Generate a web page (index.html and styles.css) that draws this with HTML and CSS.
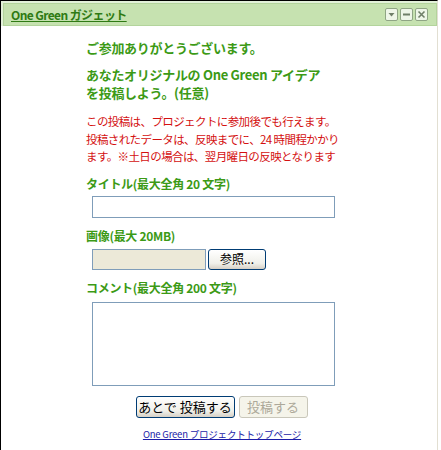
FILE: index.html
```html
<!DOCTYPE html>
<html lang="ja">
<head>
<meta charset="utf-8">
<title>One Green ガジェット</title>
<link rel="stylesheet" href="styles.css">
</head>
<body>
<div class="frame">
  <div class="header-wrap">
    <div class="header">
      <a class="title" href="#">One Green ガジェット</a>
      <div class="tools">
        <span class="tool"><svg width="11" height="11" viewBox="0 0 11 11"><path d="M2.5 4 L8.5 4 L5.5 7.5 Z" fill="#6f7f68"/></svg></span>
        <span class="tool"><svg width="11" height="11" viewBox="0 0 11 11"><rect x="2" y="4.5" width="7" height="2" fill="#6f7f68"/></svg></span>
        <span class="tool"><svg width="11" height="11" viewBox="0 0 11 11"><path d="M2.5 2.5 L8.5 8.5 M8.5 2.5 L2.5 8.5" stroke="#6f7f68" stroke-width="1.6"/></svg></span>
      </div>
    </div>
  </div>
  <div class="content">
    <p class="h1">ご参加ありがとうございます。</p>
    <p class="h2">あなたオリジナルの One Green アイデア<br>を投稿しよう。(任意)</p>
    <p class="note">この投稿は、プロジェクトに参加後でも行えます。<br>投稿されたデータは、反映までに、24 時間程かかり<br>ます。※土日の場合は、翌月曜日の反映となります</p>
    <p class="label">タイトル(最大全角 20 文字)</p>
    <div class="field"><input class="text" type="text"></div>
    <p class="label">画像(最大 20MB)</p>
    <div class="field file-row">
      <span class="file-box"></span>
      <button class="btn browse" type="button">参照...</button>
    </div>
    <p class="label">コメント(最大全角 200 文字)</p>
    <div class="field"><textarea class="area"></textarea></div>
  </div>
  <div class="actions">
    <button class="btn later" type="button">あとで 投稿する</button>
    <button class="btn submit" type="button" disabled>投稿する</button>
  </div>
  <div class="footer"><a class="link" href="#">One Green プロジェクトトップページ</a></div>
</div>
</body>
</html>
```

FILE: styles.css
```css
html, body {
  margin: 0;
  padding: 0;
  background: #ffffff;
}
body {
  font-family: "Noto Sans CJK JP", "Noto Sans", sans-serif;
}
.frame {
  width: 438px;
  height: 450px;
  border-top: 1px solid #000000;
  border-left: 1px solid #000000;
  border-right: 1px solid #e2dfd2;
  box-sizing: border-box;
  background: #ffffff;
}
.header-wrap {
  background: #e3f1d9;
  padding: 2px 0 0 2px;
}
.header {
  height: 21px;
  background: #c6e2b0;
  border: 1px solid #b3d49c;
  display: flex;
  align-items: center;
  justify-content: space-between;
  padding: 0 8px 0 7px;
}
.title {
  font-size: 12px;
  font-weight: bold;
  color: #2f7a14;
  text-decoration: underline;
  letter-spacing: -0.6px;
}
.tools {
  display: flex;
  gap: 2px;
}
.tool {
  width: 11px;
  height: 11px;
  border: 1px solid #8fa584;
  border-radius: 2px;
  background: #eef6e8;
  display: flex;
}
.content {
  padding: 13px 0 0 85px;
}
.content p {
  margin: 0;
}
.h1, .h2 {
  font-size: 13px;
  font-weight: bold;
  color: #3c9a16;
  line-height: 18px;
  letter-spacing: -0.3px;
  white-space: nowrap;
}
.h2 {
  margin-top: 9px !important;
}
.note {
  margin-top: 11px !important;
  font-size: 11.5px;
  line-height: 17.5px;
  color: #d41010;
  white-space: nowrap;
  letter-spacing: -0.6px;
}
.label {
  margin-top: 10px !important;
  font-size: 12px;
  font-weight: bold;
  line-height: 16px;
  color: #3c9a16;
  letter-spacing: -0.3px;
}
.field {
  padding-left: 6px;
  margin-top: 4px;
  display: flex;
}
.text {
  width: 243px;
  height: 22px;
  box-sizing: border-box;
  border: 1px solid #7f9db9;
  margin: 0;
  padding: 0;
}
.file-row {
  margin-top: 5px;
  gap: 2px;
}
.file-box {
  width: 114px;
  height: 21px;
  box-sizing: border-box;
  border: 1px solid #7f9db9;
  background: #ece9d8;
}
.btn {
  font-family: "Noto Sans CJK JP", sans-serif;
  font-size: 12px;
  color: #000000;
  border: 1px solid #003c74;
  border-radius: 3px;
  background: linear-gradient(#ffffff, #f0f0ea 70%, #d6d0c5);
  padding: 0;
  margin: 0;
  box-sizing: border-box;
  line-height: 1;
}
.browse {
  width: 58px;
  height: 21px;
}
.area {
  width: 243px;
  height: 84px;
  box-sizing: border-box;
  border: 1px solid #7f9db9;
  margin: 2px 0 0 0;
  padding: 0;
  resize: none;
}
.actions {
  display: flex;
  justify-content: center;
  gap: 4px;
  margin-top: 10px;
  padding-left: 5px;
}
.later {
  width: 99px;
  height: 22px;
  font-size: 13px;
}
.submit {
  width: 69px;
  height: 22px;
  font-size: 13px;
  color: #aca899;
  border-color: #c9c7ba;
  background: #f5f4ea;
}
.footer {
  text-align: center;
  margin-top: 6px;
  padding-left: 6px;
  line-height: 14px;
}
.link {
  font-size: 9.5px;
  color: #1c1ca8;
  text-decoration: underline;
  letter-spacing: -0.2px;
}
```
